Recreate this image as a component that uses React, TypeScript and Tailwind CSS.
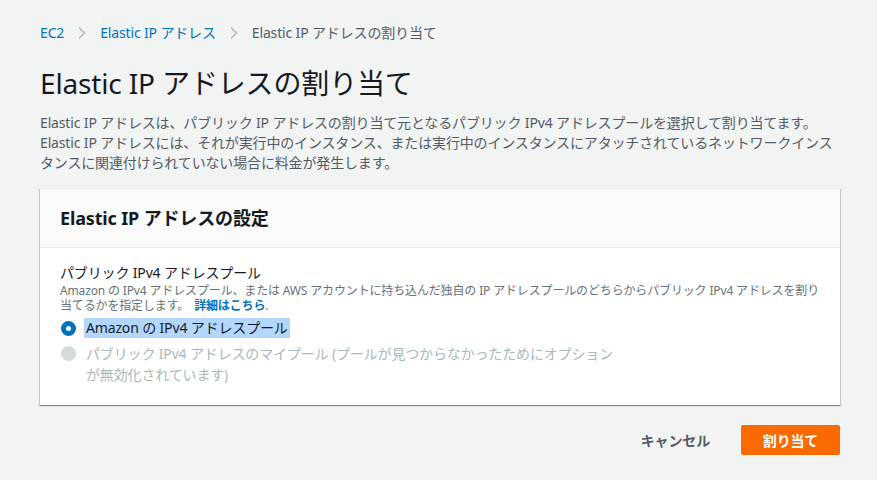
import { ChevronRight } from "lucide-react";

const font = { fontFamily: '"Noto Sans", "Noto Sans CJK JP", sans-serif' };

const Breadcrumb = () => (
  <nav className="flex items-center text-[14px] leading-5">
    <span className="text-[#0073bb]">EC2</span>
    <ChevronRight size={20} strokeWidth={1.5} className="mx-[8px] text-[#aab7b8]" />
    <span className="text-[#0073bb]">Elastic IP アドレス</span>
    <ChevronRight size={20} strokeWidth={1.5} className="mx-[8px] text-[#aab7b8]" />
    <span className="text-[#545b64]">Elastic IP アドレスの割り当て</span>
  </nav>
);

const App = () => {
  return (
    <div className="min-h-[480px] w-full bg-[#f2f3f3] px-10 pt-[23px] pb-6 tracking-[-0.15px]" style={font}>
      <div className="w-[800px]">
        <Breadcrumb />

        <h1 className="mt-[22px] text-[28px] leading-9 font-normal text-[#16191f]">
          Elastic IP アドレスの割り当て
        </h1>

        <p className="mt-3 text-[14px] leading-5 text-[#545b64]">
          Elastic IP アドレスは、パブリック IP アドレスの割り当て元となるパブリック IPv4 アドレスプールを選択して割り当てます。
          Elastic IP アドレスには、それが実行中のインスタンス、または実行中のインスタンスにアタッチされているネットワークインスタンスに関連付けられていない場合に料金が発生します。
        </p>

        <div className="mt-[15px] bg-white border-t border-[#eaeded] shadow-[0_1px_1px_0_rgba(0,28,36,0.3),1px_1px_1px_0_rgba(0,28,36,0.15),-1px_1px_1px_0_rgba(0,28,36,0.15)]">
          <div className="bg-[#fafafa] border-b border-[#eaeded] px-5 py-[18px]">
            <h2 className="text-[18px] leading-[22px] font-bold text-[#16191f]">
              Elastic IP アドレスの設定
            </h2>
          </div>

          <div className="px-5 pt-[15px] pb-5">
            <div className="text-[14px] leading-5 text-[#16191f]">パブリック IPv4 アドレスプール</div>
            <p className="text-[12px] leading-[15px] text-[#687078]">
              Amazon の IPv4 アドレスプール、または AWS アカウントに持ち込んだ独自の IP アドレスプールのどちらからパブリック IPv4 アドレスを割り当てるかを指定します。{" "}
              <a className="ml-[2px] font-bold text-[#0073bb]">詳細はこちら</a>.
            </p>

            <div className="mt-[5px] flex items-center">
              <span className="ml-[1px] h-[15px] w-[15px] shrink-0 rounded-full border-[5px] border-[#0073bb] bg-white" />
              <span className="ml-[8px] bg-[#b3d7ff] px-[2px] text-[14px] leading-5 text-[#16191f]">
                Amazon の IPv4 アドレスプール
              </span>
            </div>

            <div className="mt-[5px] flex items-start">
              <span className="ml-[1px] mt-[3px] h-[15px] w-[15px] shrink-0 rounded-full bg-[#d5dbdb]" />
              <span className="ml-[8px] px-[2px] text-[14px] leading-[21px] text-[#aab7b8]">
                パブリック IPv4 アドレスのマイプール (プールが見つからなかったためにオプション
                <br />
                が無効化されています)
              </span>
            </div>
          </div>
        </div>

        <div className="mt-5 flex items-center justify-end">
          <button className="mr-[31px] text-[14px] font-bold text-[#545b64]">キャンセル</button>
          <button className="h-[30px] w-[99px] rounded-[2px] bg-[#f96b00] text-[14px] font-bold text-white">
            割り当て
          </button>
        </div>
      </div>
    </div>
  );
};

export default App;
